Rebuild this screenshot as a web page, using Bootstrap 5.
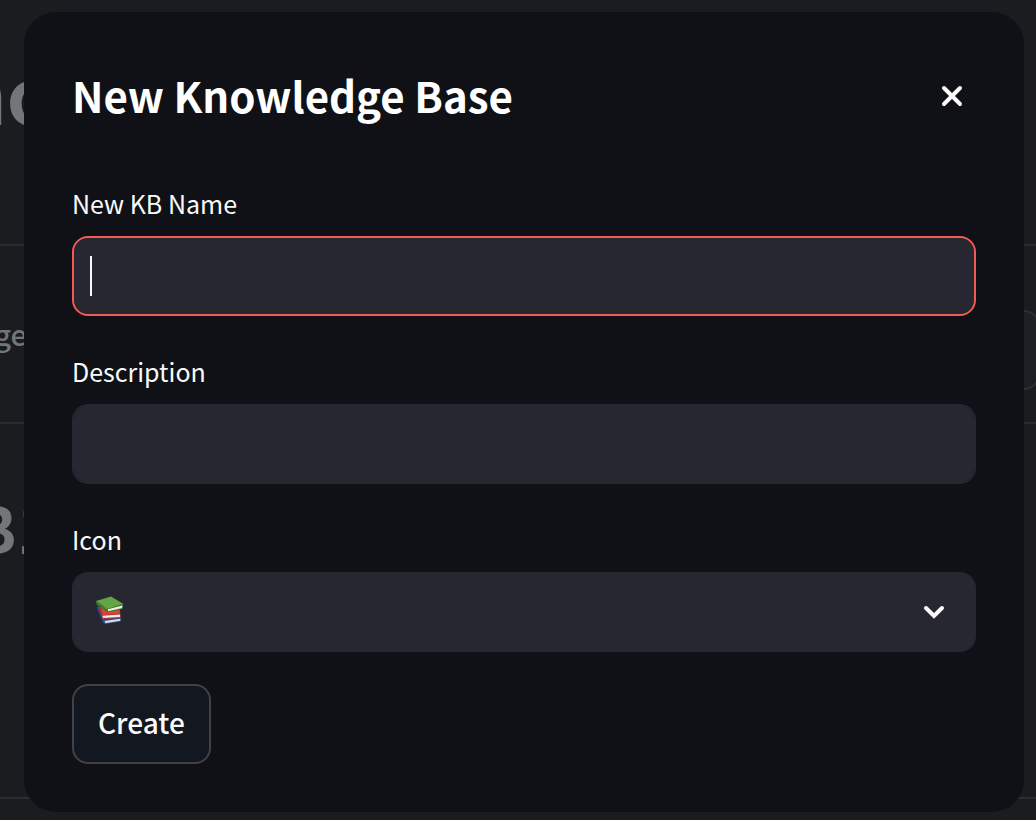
<!DOCTYPE html>
<html lang="en" data-bs-theme="dark">
<head>
<meta charset="utf-8">
<meta name="viewport" content="width=device-width, initial-scale=1">
<title>New Knowledge Base</title>
<link href="https://cdn.jsdelivr.net/npm/bootstrap@5.3.0/dist/css/bootstrap.min.css" rel="stylesheet">
<style>
  body { background: #1b1c20; color: #fafafa; font-family: "Noto Sans CJK SC", sans-serif; font-size: 25px; line-height: 40px; }
  /* dimmed page behind the dialog */
  .backdrop-page { position: absolute; inset: 0; color: #747578; overflow: hidden; }
  .page-row { display: flex; justify-content: space-between; border-bottom: 2px solid #2b2c31; }
  .edge-text { display: flex; justify-content: flex-end; width: 55px; white-space: nowrap; }
  .row-head { height: 246px; padding-top: 32px; font-size: 77px; line-height: 120px; font-weight: 700; }
  .row-label { height: 178px; padding-top: 64px; font-size: 29px; line-height: 46px; font-weight: 500; }
  .row-label .edge-text { width: 27px; }
  .row-name { height: 375px; padding-top: 57px; font-size: 65px; line-height: 90px; font-weight: 700; }
  .edge-btn { width: 32px; height: 80px; border: 2px solid #2e2f34; border-radius: 16px; background: #1c1f23; margin-right: -4px; }
  .kb-dialog { margin: 12px 12px 8px 24px; }
  .kb-panel { position: relative; background: #0f1116; border: 0; border-radius: 32px; color: #fafafa; padding: 48px; }
  .kb-title { font-size: 42px; line-height: 70px; font-weight: 700; }
  .kb-close { width: 48px; height: 48px; margin-top: 12px; color: #fafafa; }
  .kb-form { padding-top: 54px; }
  .kb-group { margin-bottom: 36px; }
  .kb-group:last-of-type { margin-bottom: 32px; }
  .kb-label { line-height: 38px; margin-bottom: 14px; }
  .kb-field { height: 80px; background-color: #262730; border: 2px solid #262730; border-radius: 16px; padding: 0 24px; color: #fafafa; font-size: 29px; caret-color: transparent; }
  .kb-field:focus, .kb-field.kb-active { background-color: #262730; box-shadow: none; border-color: #f25a55; }
  .kb-caret { position: absolute; left: 18px; top: 20px; width: 2px; height: 40px; background: #fafafa; pointer-events: none; }
  .kb-select { background-image: none; }
  .kb-books { position: absolute; left: 22px; top: 22px; pointer-events: none; }
  .kb-chevron { position: absolute; right: 30px; top: 26px; pointer-events: none; }
  .kb-create { height: 80px; border: 2px solid #414248; border-radius: 16px; background: #131720; color: #fafafa; font-size: 28px; font-weight: 500; line-height: 72px; padding: 0 24px 4px; }
</style>
</head>
<body>
<div class="backdrop-page" aria-hidden="true">
  <div class="page-row row-head"><span class="edge-text">no</span></div>
  <div class="page-row row-label"><span class="edge-text">ge</span><span class="edge-btn"></span></div>
  <div class="page-row row-name"><span class="edge-text">KB1</span></div>
</div>

<main class="kb-dialog" role="dialog" aria-labelledby="dialog-title">
  <div class="modal-content kb-panel">
    <header class="d-flex align-items-start justify-content-between">
      <h1 class="kb-title m-0" id="dialog-title">New Knowledge Base</h1>
      <button type="button" class="kb-close btn p-0 d-flex align-items-center justify-content-center" aria-label="Close">
        <svg width="24" height="24" viewBox="0 0 24 24" fill="none" stroke="currentColor" stroke-width="4" stroke-linecap="round"><path d="M4 4 20 20M20 4 4 20"/></svg>
      </button>
    </header>
    <form class="kb-form">
      <div class="kb-group">
        <label class="kb-label d-block" for="kb-name">New KB Name</label>
        <div class="position-relative">
          <input type="text" class="form-control kb-field kb-active" id="kb-name" autocomplete="off" autofocus>
          <span class="kb-caret"></span>
        </div>
      </div>
      <div class="kb-group">
        <label class="kb-label d-block" for="kb-desc">Description</label>
        <input type="text" class="form-control kb-field" id="kb-desc" autocomplete="off">
      </div>
      <div class="kb-group">
        <label class="kb-label d-block" for="kb-icon">Icon</label>
        <div class="position-relative">
          <select class="form-select kb-field kb-select" id="kb-icon"><option value="books" label=" "></option></select>
          <svg class="kb-books" width="32" height="32" viewBox="0 0 32 32">
            <path d="M2.500 13 5 12.500 11 24 25 23 27.500 24 26.500 27.500 11 30 9 28.500Z" fill="#2f4a94"/>
            <path d="M10.500 27 26 24.800 26.500 26.800 11.500 29.200Z" fill="#dcdad9"/>
            <path d="M5 13 8 12 25 13 26.500 19.500 27 24 9 25 7.500 22.500Z" fill="#b3302a"/>
            <path d="M7 14 25 15 26 19.500 9 21Z" fill="#da4438"/>
            <path d="M8.500 21.800 26 20.500 26 23 9 24Z" fill="#efebeb"/>
            <path d="M2 7 12 15 29 10.500 28.500 15 13.500 18.500 2.500 10.500Z" fill="#387f29"/>
            <path d="M14 15.200 28.500 11.500 28 14 14 17.200Z" fill="#eef1ea"/>
            <path d="M2 7 17 2.500 29.500 10 13 15Z" fill="#63a545"/>
          </svg>
          <svg class="kb-chevron" width="24" height="24" viewBox="0 0 24 24" fill="none" stroke="#fafafa" stroke-width="4" stroke-linecap="round" stroke-linejoin="miter"><path d="m4 10 8 8 8-8"/></svg>
        </div>
      </div>
      <button type="button" class="btn kb-create">Create</button>
    </form>
  </div>
</main>
<script src="https://cdn.jsdelivr.net/npm/bootstrap@5.3.0/dist/js/bootstrap.bundle.min.js"></script>
</body>
</html>
